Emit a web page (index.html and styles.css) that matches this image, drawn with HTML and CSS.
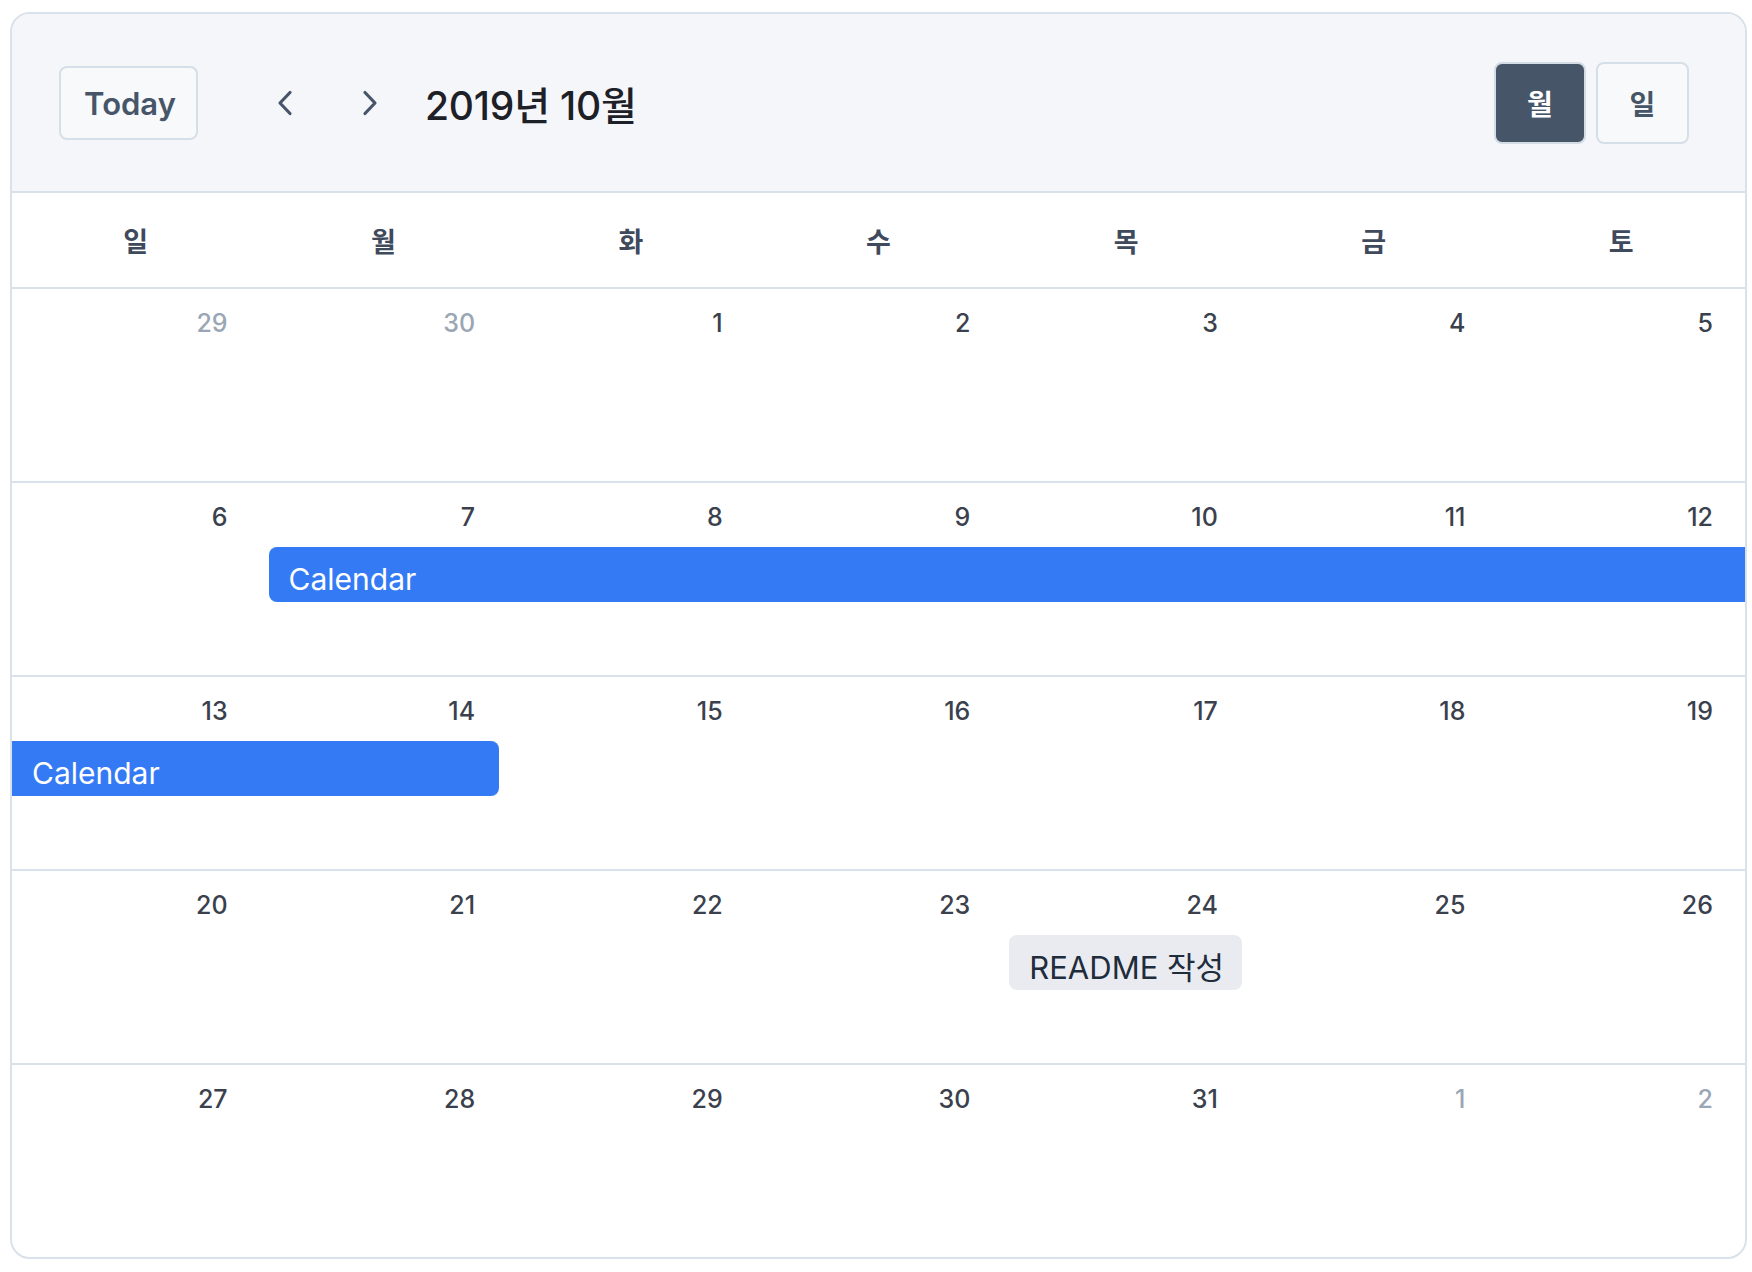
FILE: index.html
```html
<!DOCTYPE html>
<html lang="ko">
<head>
<meta charset="utf-8">
<title>Calendar</title>
<link rel="stylesheet" href="styles.css">
</head>
<body>
<div class="calendar">
  <header class="toolbar">
    <button class="btn today">Today</button>
    <button class="nav prev" aria-label="이전">
      <svg width="16" height="26" viewBox="0 0 16 26"><path d="M13 2.5 L3 13 L13 23.5" fill="none" stroke="#475569" stroke-width="3.2" stroke-linecap="round" stroke-linejoin="round"/></svg>
    </button>
    <button class="nav next" aria-label="다음">
      <svg width="16" height="26" viewBox="0 0 16 26"><path d="M3 2.5 L13 13 L3 23.5" fill="none" stroke="#475569" stroke-width="3.2" stroke-linecap="round" stroke-linejoin="round"/></svg>
    </button>
    <h1 class="title">2019년 10월</h1>
    <div class="views">
      <button class="btn view active">월</button>
      <button class="btn view">일</button>
    </div>
  </header>

  <div class="weekdays">
    <div>일</div><div>월</div><div>화</div><div>수</div><div>목</div><div>금</div><div>토</div>
  </div>

  <div class="week first">
    <div class="num muted">29</div><div class="num muted">30</div><div class="num">1</div><div class="num">2</div><div class="num">3</div><div class="num">4</div><div class="num">5</div>
  </div>

  <div class="week">
    <div class="num">6</div><div class="num">7</div><div class="num">8</div><div class="num">9</div><div class="num">10</div><div class="num">11</div><div class="num">12</div>
    <div class="event blue cont-right" style="grid-column: 2 / 8;">Calendar</div>
  </div>

  <div class="week">
    <div class="num">13</div><div class="num">14</div><div class="num">15</div><div class="num">16</div><div class="num">17</div><div class="num">18</div><div class="num">19</div>
    <div class="event blue cont-left" style="grid-column: 1 / 3;">Calendar</div>
  </div>

  <div class="week">
    <div class="num">20</div><div class="num">21</div><div class="num">22</div><div class="num">23</div><div class="num">24</div><div class="num">25</div><div class="num">26</div>
    <div class="event gray" style="grid-column: 5 / 6;">README 작성</div>
  </div>

  <div class="week">
    <div class="num">27</div><div class="num">28</div><div class="num">29</div><div class="num">30</div><div class="num">31</div><div class="num muted">1</div><div class="num muted">2</div>
  </div>
</div>
</body>
</html>
```

FILE: styles.css
```css
* { box-sizing: border-box; }

html, body {
  margin: 0;
  background: #ffffff;
}

body {
  padding: 12px 5px 0 10px;
  font-family: "Inter", "Noto Sans CJK KR", sans-serif;
}

.calendar {
  width: 1737px;
  height: 1247px;
  border: 2px solid #d9e1ea;
  border-radius: 20px;
  overflow: hidden;
  background: #ffffff;
}

.toolbar {
  height: 179px;
  background: #f5f6fa;
  border-bottom: 2px solid #d9e1ea;
  display: flex;
  align-items: center;
  padding: 0 56px 0 47px;
}

button {
  font-family: inherit;
  cursor: pointer;
}

.btn {
  background: #f8f9fb;
  border: 2px solid #d6dee8;
  border-radius: 8px;
  color: #475569;
  font-weight: 600;
}

.today {
  width: 139px;
  height: 74px;
  font-size: 31px;
  padding: 2px 0 0 3px;
  margin-right: 60px;
}

.nav {
  width: 54px;
  height: 54px;
  background: transparent;
  border: 0;
  padding: 0;
  display: flex;
  align-items: center;
  justify-content: center;
}

.nav.next {
  margin-left: 31px;
}

.title {
  margin: 0 0 0 28px;
  font-size: 39px;
  font-weight: 500;
  color: #1d2127;
  letter-spacing: -0.2px;
}

.views {
  margin-left: auto;
  display: flex;
  gap: 10px;
}

.view {
  width: 93px;
  height: 82px;
  font-size: 28px;
  padding: 0;
}

.view.active {
  width: 92px;
  background: #475569;
  color: #ffffff;
  border-color: #d3dbe5;
}

.weekdays {
  height: 96px;
  display: grid;
  grid-template-columns: repeat(7, 1fr);
  align-items: center;
  border-bottom: 2px solid #d9e1ea;
  text-align: center;
  font-size: 27px;
  font-weight: 700;
  color: #3f4a5c;
}

.week {
  height: 194px;
  border-top: 2px solid #d9e1ea;
  display: grid;
  grid-template-columns: repeat(7, 1fr);
  grid-template-rows: 49px 55px;
  row-gap: 15px;
  align-content: start;
}

.week.first {
  height: 192px;
  border-top: 0;
}

.num {
  grid-row: 1;
  padding: 20px 32px 0 0;
  text-align: right;
  font-size: 25px;
  line-height: 29px;
  font-weight: 500;
  color: #3a414d;
}

.num.muted {
  color: #9aa6b5;
}

.event {
  grid-row: 2;
  height: 55px;
  line-height: 45px;
  padding: 10px 20px 0;
  font-size: 30px;
  white-space: nowrap;
  overflow: hidden;
  border-radius: 8px;
}

.event.blue {
  background: #357af5;
  color: #ffffff;
}

.event.gray {
  background: #e9ebf1;
  color: #1f2c3b;
  margin: 0 8px 0 7px;
  font-size: 31px;
}

.event.cont-right {
  margin-left: 9px;
  border-radius: 8px 0 0 8px;
}

.event.cont-left {
  margin-right: 8px;
  border-radius: 0 8px 8px 0;
}
```
